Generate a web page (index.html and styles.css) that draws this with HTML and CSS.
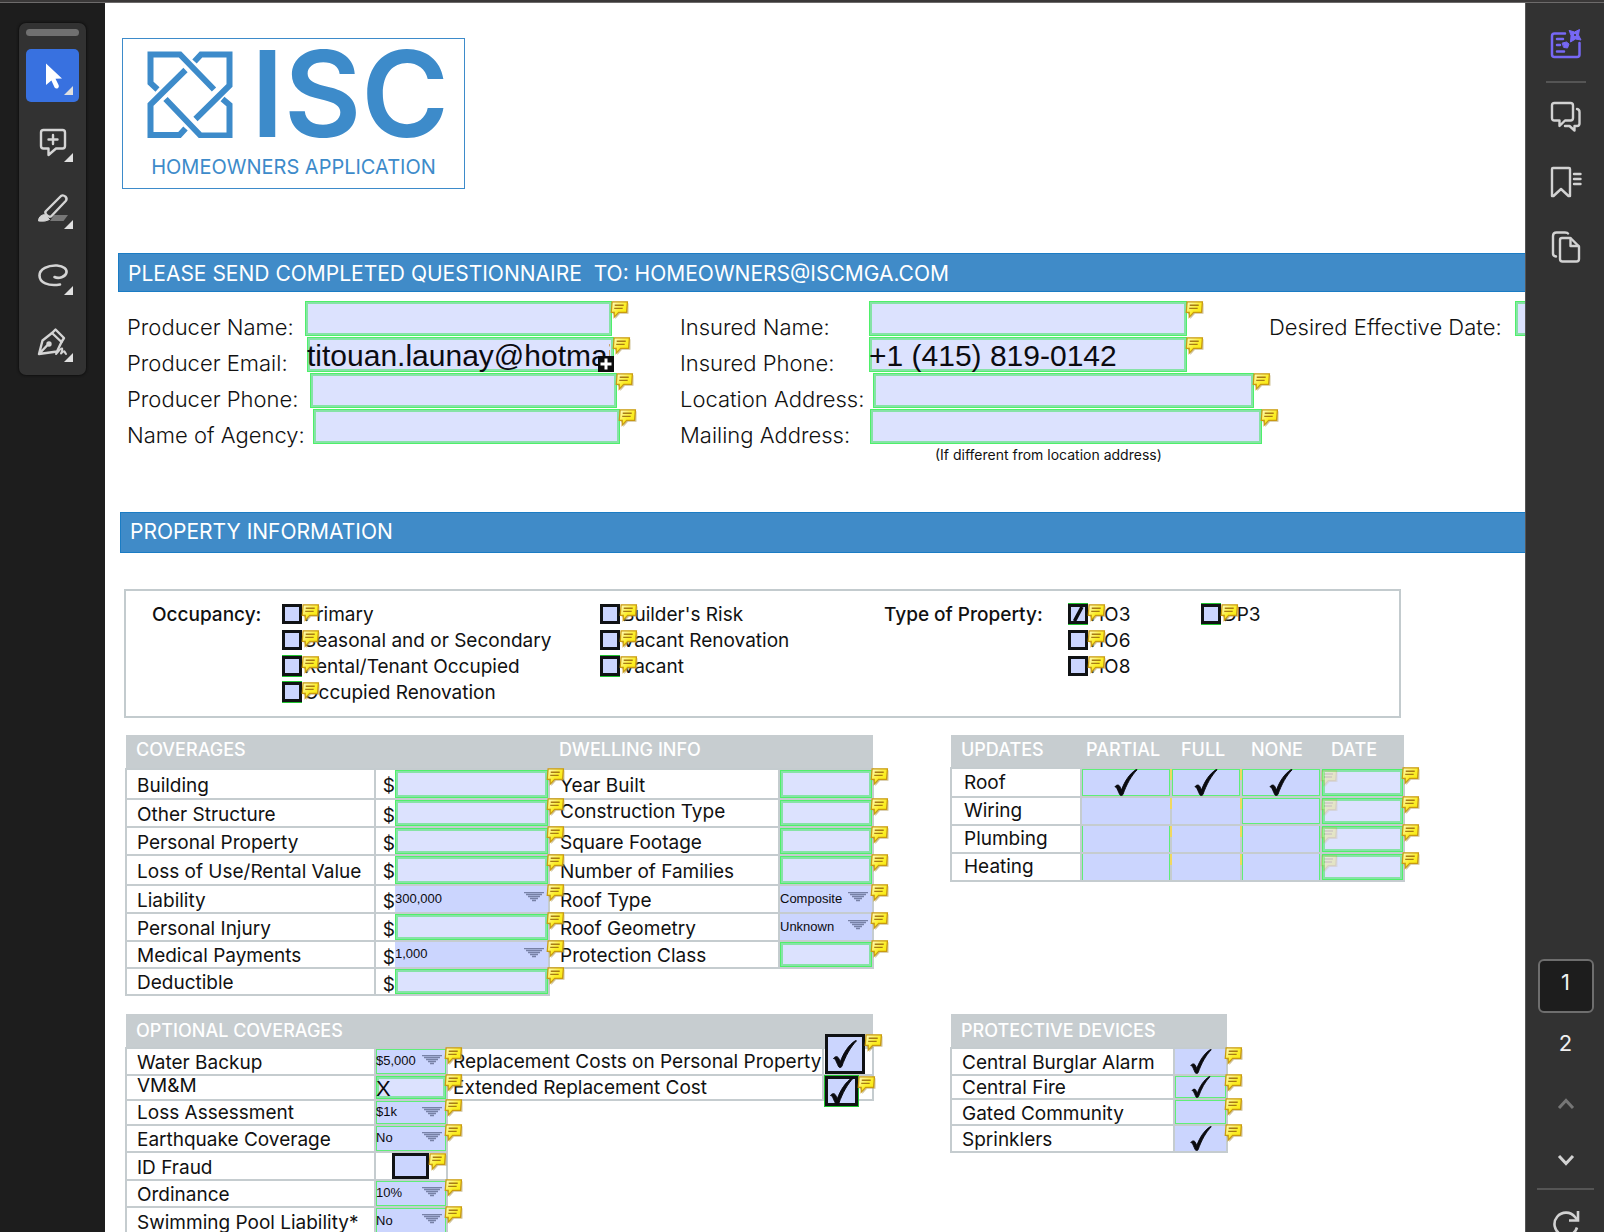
FILE: index.html
```html
<!DOCTYPE html>
<html lang="en">
<head>
<meta charset="utf-8">
<title>Homeowners Application</title>
<link rel="stylesheet" href="styles.css">
</head>
<body>
<svg class="defs" aria-hidden="true">
  <defs>
    <linearGradient id="noteFill" x1="0" y1="0" x2="1" y2="1">
      <stop offset="0" stop-color="#fffbd0"/>
      <stop offset="0.5" stop-color="#fcee2c"/>
      <stop offset="1" stop-color="#f8ea00"/>
    </linearGradient>
    <symbol id="note" viewBox="0 0 18 17">
      <path d="M3 2h14.5v10h-8l-4.500 5v-4.500H2.500z" fill="#a98f45" opacity="0.55"/>
      <path d="M2 .8h14.500l-.8 9.900H8.200L4 15.300v-4.600H1.200z" fill="url(#noteFill)" stroke="#c99a10" stroke-width="1.200"/>
      <path d="M4.500 4h8.500M4 7h8" stroke="#a87c14" stroke-width="1.300"/>
    </symbol>
    <symbol id="arrow" viewBox="0 0 20 10">
      <path d="M0 .5h20M2 2.500h16M4 4.500h12M6 6.500h8M8 8.500h4" stroke="#7781a6" stroke-width="1.300"/>
    </symbol>
    <symbol id="check" viewBox="0 0 24 28">
      <path d="M.5 18.500c1.500-2.200 4-2.600 5.200-.2l1.600 3.500C10.500 13 15.500 5 22.500.6L23.500.8C17.500 7 12.500 16 8.800 26.500c-.8 1.200-2.500 1.400-3.200.2C4 23.500 3 20.500 1.800 18.800z" fill="#0b0b10" stroke="#0b0b10"/>
    </symbol>
    <symbol id="corner" viewBox="0 0 9 9"><path d="M9 0v9H0z" fill="#e0e0e0"/></symbol>
  </defs>
</svg>

<div class="topline"></div>
<div class="app">
  <aside class="left">
    <div class="tools">
      <span class="grip"></span>
      <div class="tool-list">
        <button class="tool tool-active" aria-label="Select">
          <svg width="34" height="34" viewBox="0 0 34 34"><path d="M10 4.500v21.500l5.400-4.400 3.200 6.800q1.300 1.800 3.200.8 1.600-1 .9-3l-3.200-6.400 6.500-.4z" fill="#fff"/></svg>
          <svg class="corner" aria-hidden="true"><use href="#corner"/></svg>
        </button>
        <button class="tool" aria-label="Add comment">
          <svg width="34" height="34" viewBox="0 0 34 34" fill="none" stroke="#d4d4d4" stroke-width="2.400" stroke-linejoin="round" stroke-linecap="round"><path d="M7.500 5h19q2.500 0 2.500 2.500v13.500q0 2.500-2.500 2.500H20l-7.500 6.500v-6.500h-5Q5 23.500 5 21V7.500Q5 5 7.500 5z"/><path d="M17 10v9M12.500 14.500h9"/></svg>
          <svg class="corner" aria-hidden="true"><use href="#corner"/></svg>
        </button>
        <button class="tool" aria-label="Highlight">
          <svg width="34" height="34" viewBox="0 0 34 34" fill="none" stroke="#d4d4d4" stroke-width="2.400" stroke-linejoin="round"><path d="M18 23h14l-4.500 6H14z" fill="#777" stroke="none"/><path d="M9.500 19.500 25 4q2-1.500 4.500.6 2 2.200.2 4.400L15 24.500q-2 .8-4-1.200-2.200-2-1.500-3.800z"/><path d="m8.500 22.500 5 5q-4 2.500-11 1.500 0-5.500 6-6.500z" fill="#d4d4d4" stroke-width="1"/></svg>
          <svg class="corner" aria-hidden="true"><use href="#corner"/></svg>
        </button>
        <button class="tool" aria-label="Draw">
          <svg width="34" height="34" viewBox="0 0 34 34" fill="none" stroke="#d4d4d4" stroke-width="2.600" stroke-linecap="round"><path d="M24 25.500C12 27.500 3.500 23.500 3.500 16.500 3.500 10 12 6 21 6.500c7 .5 10 3.800 9.500 7-.8 4.500-8 6.500-12 4.500"/></svg>
          <svg class="corner" aria-hidden="true"><use href="#corner"/></svg>
        </button>
        <button class="tool" aria-label="Sign">
          <svg width="34" height="34" viewBox="0 0 34 34" fill="none" stroke="#d4d4d4" stroke-width="2.400" stroke-linejoin="round" stroke-linecap="round"><path d="M3 28 6.500 14.500 16 7l9.500 9L21 25.500 3 28l8-8.500"/><path d="m16 7 3.500-3.500 8.500 8.500-2.500 4"/><circle cx="13" cy="18" r="1.500" fill="#d4d4d4"/><path d="M20 28q5-6 6-5.500t-1 5q3-3 3.500-2t1.500 2.500" stroke-width="2"/></svg>
          <svg class="corner" aria-hidden="true"><use href="#corner"/></svg>
        </button>
      </div>
    </div>
  </aside>

  <main class="doc">
    <header class="logo">
      <div class="logo-row">
        <svg width="86" height="87" viewBox="0 0 86 87" fill="none" stroke="#3d8bca" stroke-width="6" aria-hidden="true">
          <path d="M10.500 38.500 3.500 32V3.500h29.500l34 35"/>
          <path d="M47.500 10.500 54 3.500h28.500v31L48.500 68"/>
          <path d="M75.500 48l7 6v30.500H53.500l-35-36.500"/>
          <path d="M38.500 77.500l-6 6.500H3.500V53.500L38.500 19"/>
        </svg>
        <h1>ISC</h1>
      </div>
      <p>HOMEOWNERS APPLICATION</p>
    </header>

    <h2 class="bar">PLEASE SEND COMPLETED QUESTIONNAIRE &nbsp;TO: HOMEOWNERS@ISCMGA.COM</h2>

    <form class="contact">
      <div class="group group-producer">
        <div class="line"><label class="w178" for="pname">Producer Name:</label><span class="field f307"><input id="pname"><svg class="note"><use href="#note"/></svg></span></div>
        <div class="line"><label class="w180" for="pemail">Producer Email:</label><span class="field f307"><input id="pemail" value="titouan.launay@hotmail.com"><svg class="more" viewBox="0 0 16 16"><path d="M0 0h16v16H0z" fill="#0c0c0c"/><path d="M8 2.500v11M2.500 8h11" stroke="#fff" stroke-width="3"/></svg><svg class="note"><use href="#note"/></svg></span></div>
        <div class="line"><label class="w183" for="pphone">Producer Phone:</label><span class="field f307"><input id="pphone"><svg class="note"><use href="#note"/></svg></span></div>
        <div class="line"><label class="w186" for="agency">Name of Agency:</label><span class="field f307"><input id="agency"><svg class="note"><use href="#note"/></svg></span></div>
      </div>
      <div class="group group-insured">
        <div class="line"><label class="w189" for="iname">Insured Name:</label><span class="field f318"><input id="iname"><svg class="note"><use href="#note"/></svg></span></div>
        <div class="line"><label class="w189" for="iphone">Insured Phone:</label><span class="field f318"><input id="iphone" value="+1 (415) 819-0142"><svg class="note"><use href="#note"/></svg></span></div>
        <div class="line"><label class="w193" for="loc">Location Address:</label><span class="field f381"><input id="loc"><svg class="note"><use href="#note"/></svg></span></div>
        <div class="line"><label class="w190" for="mail">Mailing Address:</label><span class="field f392"><input id="mail"><svg class="note"><use href="#note"/></svg></span></div>
        <p class="hint">(If different from location address)</p>
      </div>
      <div class="group">
        <div class="line"><label class="w246" for="eff">Desired Effective Date:</label><span class="field f307"><input id="eff"></span></div>
      </div>
    </form>

    <h2 class="bar bar-property">PROPERTY INFORMATION</h2>

    <section class="occupancy">
      <h3>Occupancy:</h3>
      <div class="choices">
        <label class="choice"><span class="box"><input type="checkbox"><svg class="note"><use href="#note"/></svg></span>Primary</label>
        <label class="choice"><span class="box"><input type="checkbox"><svg class="note"><use href="#note"/></svg></span>Seasonal and or Secondary</label>
        <label class="choice"><span class="box box-lime"><input type="checkbox"><svg class="note"><use href="#note"/></svg></span>Rental/Tenant Occupied</label>
        <label class="choice"><span class="box box-lime"><input type="checkbox"><svg class="note"><use href="#note"/></svg></span>Occupied Renovation</label>
      </div>
      <div class="choices">
        <label class="choice"><span class="box"><input type="checkbox"><svg class="note"><use href="#note"/></svg></span>Builder's Risk</label>
        <label class="choice"><span class="box"><input type="checkbox"><svg class="note"><use href="#note"/></svg></span>Vacant Renovation</label>
        <label class="choice"><span class="box box-lime"><input type="checkbox"><svg class="note"><use href="#note"/></svg></span>Vacant</label>
      </div>
      <h3>Type of Property:</h3>
      <div class="choices">
        <label class="choice"><span class="box box-lime"><input type="checkbox" checked><svg class="slash" viewBox="0 0 14 14"><path d="M3.500 14 11 0" fill="none" stroke="#0b0b10" stroke-width="3.500"/></svg><svg class="note"><use href="#note"/></svg></span>HO3</label>
        <label class="choice"><span class="box"><input type="checkbox"><svg class="note"><use href="#note"/></svg></span>HO6</label>
        <label class="choice"><span class="box"><input type="checkbox"><svg class="note"><use href="#note"/></svg></span>HO8</label>
      </div>
      <div class="choices">
        <label class="choice"><span class="box box-lime"><input type="checkbox"><svg class="note"><use href="#note"/></svg></span>DP3</label>
      </div>
    </section>

    <section class="tables">
      <table class="coverages">
        <colgroup><col class="c249"><col class="c174"><col class="c230"><col class="c94"></colgroup>
        <thead><tr><th colspan="2">COVERAGES</th><th colspan="2">DWELLING INFO</th></tr></thead>
        <tbody>
          <tr class="r30"><th><label for="c1">Building</label></th><td><div class="money">$<span class="field"><input id="c1"><svg class="note"><use href="#note"/></svg></span></div></td><th><label for="d1">Year Built</label></th><td><span class="field"><input id="d1"><svg class="note"><use href="#note"/></svg></span></td></tr>
          <tr class="r28"><th><label for="c2">Other Structure</label></th><td><div class="money">$<span class="field"><input id="c2"><svg class="note"><use href="#note"/></svg></span></div></td><th class="raised"><label for="d2">Construction Type</label></th><td><span class="field"><input id="d2"><svg class="note"><use href="#note"/></svg></span></td></tr>
          <tr class="r28"><th><label for="c3">Personal Property</label></th><td><div class="money">$<span class="field"><input id="c3"><svg class="note"><use href="#note"/></svg></span></div></td><th><label for="d3">Square Footage</label></th><td><span class="field"><input id="d3"><svg class="note"><use href="#note"/></svg></span></td></tr>
          <tr class="r30"><th><label for="c4">Loss of Use/Rental Value</label></th><td><div class="money">$<span class="field"><input id="c4"><svg class="note"><use href="#note"/></svg></span></div></td><th><label for="d4">Number of Families</label></th><td><span class="field"><input id="d4"><svg class="note"><use href="#note"/></svg></span></td></tr>
          <tr class="r28"><th><label for="c5">Liability</label></th><td><div class="money">$<span class="field pick"><select id="c5"><option>300,000</option></select><svg class="arrow"><use href="#arrow"/></svg><svg class="note"><use href="#note"/></svg></span></div></td><th><label for="d5">Roof Type</label></th><td><span class="field pick"><select id="d5"><option>Composite</option></select><svg class="arrow"><use href="#arrow"/></svg><svg class="note"><use href="#note"/></svg></span></td></tr>
          <tr class="r28"><th><label for="c6">Personal Injury</label></th><td><div class="money">$<span class="field"><input id="c6"><svg class="note"><use href="#note"/></svg></span></div></td><th><label for="d6">Roof Geometry</label></th><td><span class="field pick"><select id="d6"><option>Unknown</option></select><svg class="arrow"><use href="#arrow"/></svg><svg class="note"><use href="#note"/></svg></span></td></tr>
          <tr class="r27"><th><label for="c7">Medical Payments</label></th><td><div class="money">$<span class="field pick"><select id="c7"><option>1,000</option></select><svg class="arrow"><use href="#arrow"/></svg><svg class="note"><use href="#note"/></svg></span></div></td><th><label for="d7">Protection Class</label></th><td><span class="field"><input id="d7"><svg class="note"><use href="#note"/></svg></span></td></tr>
          <tr class="r27"><th><label for="c8">Deductible</label></th><td><div class="money">$<span class="field"><input id="c8"><svg class="note"><use href="#note"/></svg></span></div></td></tr>
        </tbody>
      </table>

      <table class="updates">
        <colgroup><col class="c130"><col class="c90"><col class="c70"><col class="c80"><col class="c83"></colgroup>
        <thead><tr><th>UPDATES</th><th>PARTIAL</th><th>FULL</th><th>NONE</th><th>DATE</th></tr></thead>
        <tbody>
          <tr class="r29"><th>Roof</th><td><span class="tick lime"><input type="checkbox" checked aria-label="Roof partial"><svg class="check"><use href="#check"/></svg></span></td><td><span class="tick lime sliver"><input type="checkbox" checked aria-label="Roof full"><svg class="check"><use href="#check"/></svg></span></td><td><span class="tick lime sliver"><input type="checkbox" checked aria-label="Roof none"><svg class="check"><use href="#check"/></svg></span></td><td><span class="field"><input aria-label="Roof date"><svg class="ghost"><use href="#note"/></svg><svg class="note"><use href="#note"/></svg></span></td></tr>
          <tr class="r28"><th>Wiring</th><td><span class="tick"><input type="checkbox" aria-label="Wiring partial"></span></td><td><span class="tick sliver"><input type="checkbox" aria-label="Wiring full"></span></td><td><span class="tick lime sliver"><input type="checkbox" aria-label="Wiring none"></span></td><td><span class="field"><input aria-label="Wiring date"><svg class="ghost"><use href="#note"/></svg><svg class="note"><use href="#note"/></svg></span></td></tr>
          <tr class="r28"><th>Plumbing</th><td><span class="tick lime-side"><input type="checkbox" aria-label="Plumbing partial"></span></td><td><span class="tick sliver"><input type="checkbox" aria-label="Plumbing full"></span></td><td><span class="tick lime-side sliver"><input type="checkbox" aria-label="Plumbing none"></span></td><td><span class="field"><input aria-label="Plumbing date"><svg class="ghost"><use href="#note"/></svg><svg class="note"><use href="#note"/></svg></span></td></tr>
          <tr class="r28"><th>Heating</th><td><span class="tick lime-side"><input type="checkbox" aria-label="Heating partial"></span></td><td><span class="tick sliver"><input type="checkbox" aria-label="Heating full"></span></td><td><span class="tick lime-side sliver"><input type="checkbox" aria-label="Heating none"></span></td><td><span class="field"><input aria-label="Heating date"><svg class="ghost"><use href="#note"/></svg><svg class="note"><use href="#note"/></svg></span></td></tr>
        </tbody>
      </table>

      <table class="optional">
        <colgroup><col class="c249"><col class="c72"><col class="c376"><col class="c50"></colgroup>
        <thead><tr><th colspan="4">OPTIONAL COVERAGES</th></tr></thead>
        <tbody>
          <tr class="r27"><th><label for="o1">Water Backup</label></th><td><span class="field pick lime"><select id="o1"><option>$5,000</option></select><svg class="arrow"><use href="#arrow"/></svg><svg class="note"><use href="#note"/></svg></span></td><th class="tight"><label for="o8">Replacement Costs on Personal Property</label></th><td><span class="box box-big"><input id="o8" type="checkbox" checked><svg class="check"><use href="#check"/></svg><svg class="note"><use href="#note"/></svg></span></td></tr>
          <tr class="r25"><th class="raised"><label for="o2">VM&amp;M</label></th><td><span class="field mark"><input id="o2" value="X"><svg class="note"><use href="#note"/></svg></span></td><th class="tight"><label for="o9">Extended Replacement Cost</label></th><td><span class="box box-mid"><input id="o9" type="checkbox" checked><svg class="check"><use href="#check"/></svg><svg class="note"><use href="#note"/></svg></span></td></tr>
          <tr class="r25"><th><label for="o3">Loss Assessment</label></th><td><span class="field pick lime"><select id="o3"><option>$1k</option></select><svg class="arrow"><use href="#arrow"/></svg><svg class="note"><use href="#note"/></svg></span></td></tr>
          <tr class="r27"><th><label for="o4">Earthquake Coverage</label></th><td><span class="field pick lime"><select id="o4"><option>No</option></select><svg class="arrow"><use href="#arrow"/></svg><svg class="note"><use href="#note"/></svg></span></td></tr>
          <tr class="r28"><th><label for="o5">ID Fraud</label></th><td><span class="box box-wide"><input id="o5" type="checkbox"><svg class="note"><use href="#note"/></svg></span></td></tr>
          <tr class="r27"><th><label for="o6">Ordinance</label></th><td><span class="field pick lime"><select id="o6"><option>10%</option></select><svg class="arrow"><use href="#arrow"/></svg><svg class="note"><use href="#note"/></svg></span></td></tr>
          <tr class="r28"><th><label for="o7">Swimming Pool Liability*</label></th><td><span class="field pick lime"><select id="o7"><option>No</option></select><svg class="arrow"><use href="#arrow"/></svg><svg class="note"><use href="#note"/></svg></span></td></tr>
          <tr class="r28"><th></th><td><span class="box box-next"><input type="checkbox" aria-label="Include"></span></td></tr>
        </tbody>
      </table>

      <table class="protective">
        <colgroup><col class="c223"><col class="c53"></colgroup>
        <thead><tr><th colspan="2">PROTECTIVE DEVICES</th></tr></thead>
        <tbody>
          <tr class="r27"><th><label for="p1">Central Burglar Alarm</label></th><td><span class="tick"><input id="p1" type="checkbox" checked><svg class="check"><use href="#check"/></svg><svg class="note"><use href="#note"/></svg></span></td></tr>
          <tr class="r24"><th><label for="p2">Central Fire</label></th><td><span class="tick lime"><input id="p2" type="checkbox" checked><svg class="check"><use href="#check"/></svg><svg class="note"><use href="#note"/></svg></span></td></tr>
          <tr class="r26"><th><label for="p3">Gated Community</label></th><td><span class="tick lime"><input id="p3" type="checkbox"><svg class="note"><use href="#note"/></svg></span></td></tr>
          <tr class="r27"><th><label for="p4">Sprinklers</label></th><td><span class="tick"><input id="p4" type="checkbox" checked><svg class="check"><use href="#check"/></svg><svg class="note"><use href="#note"/></svg></span></td></tr>
        </tbody>
      </table>
    </section>
  </main>

  <aside class="rail">
    <div class="rail-top">
      <button aria-label="AI assistant"><svg width="32" height="32" viewBox="0 0 32 32" fill="none" stroke="#7768f5" stroke-width="2.500" stroke-linecap="round" stroke-linejoin="round"><path d="M15 5.500H4.500Q2 5.500 2 8v18.500Q2 29 4.500 29h22.500q2.500 0 2.500-2.500V15"/><path d="M7 11h6M7 17h3M7 23.500h7"/><path d="m19.500 2.500 5 1.500 5-2.500-1 5.500 2.500 5-5.500-1-5 3 .5-6z" fill="#7768f5" stroke-width="1"/><path d="m12.500 15 4-1 2.500 2-1.500 4-3.500-.5z" fill="#7768f5" stroke-width="1"/><circle cx="25" cy="7" r="1" fill="#323232" stroke="none"/></svg></button>
      <hr>
      <button aria-label="Comments"><svg width="32" height="32" viewBox="0 0 32 32" fill="none" stroke="#d2d2d2" stroke-width="2.400" stroke-linejoin="round" stroke-linecap="round"><path d="M4.500 2h16Q23 2 23 4.500V17q0 2.500-2.500 2.500H15L9.500 25v-5.500h-5Q2 19.500 2 17V4.500Q2 2 4.500 2z"/><path d="M27 8q2.500.5 2.500 3v11.500q0 2.500-2.500 2.500h-2.500v4.500L19.500 25H15"/></svg></button>
      <button aria-label="Bookmarks"><svg width="32" height="32" viewBox="0 0 32 32" fill="none" stroke="#d2d2d2" stroke-width="2.400" stroke-linejoin="round" stroke-linecap="round"><path d="M3 2h16q1 0 1 1v27h-1.500L11 23l-7.500 7H2V3q0-1 1-1z"/><path d="M24 8h6.500M24 13h6.500M24 18h6.500"/></svg></button>
      <button aria-label="Pages"><svg width="32" height="32" viewBox="0 0 32 32" fill="none" stroke="#d2d2d2" stroke-width="2.400" stroke-linejoin="round" stroke-linecap="round"><path d="M12 7h8.500l8.500 8.500V28q0 2.500-2.500 2.500H12.500Q10 30.500 10 28V9q0-2 2-2z"/><path d="M20.500 7.500V15h8"/><path d="M6 25.500q-3-.5-3-3V5Q3 1.500 6.500 1.500H15q2.500 0 3 1"/></svg></button>
    </div>
    <div class="rail-bottom">
      <button class="page page-current">1</button>
      <button class="page">2</button>
      <button class="step" aria-label="Previous page"><svg width="18" height="12" viewBox="0 0 18 12" fill="none" stroke="#767676" stroke-width="3"><path d="m2 10 7-7.500L16 10"/></svg></button>
      <button class="step" aria-label="Next page"><svg width="18" height="12" viewBox="0 0 18 12" fill="none" stroke="#d2d2d2" stroke-width="3"><path d="m2 2 7 7.500L16 2"/></svg></button>
      <hr class="wide">
      <button class="rotate" aria-label="Rotate"><svg width="28" height="28" viewBox="0 0 28 28" fill="none" stroke="#d2d2d2" stroke-width="2.600"><path d="M25 17.500A11.500 11.500 0 1 1 23 7l2.500 3"/><path d="M26 1v9.500h-9"/></svg></button>
    </div>
  </aside>
</div>
</body>
</html>
```
FILE: styles.css
```css
* { box-sizing: border-box; }

body {
  margin: 0;
  background: #1d1d1d;
  color: #111;
  font-family: Inter, "Open Sans", sans-serif;
  overflow: hidden;
}

button {
  border: 0;
  padding: 0;
  background: none;
  font: inherit;
}

svg { display: block; flex: none; }
.defs { position: absolute; width: 0; height: 0; }

.topline {
  height: 3px;
  background: #3a3838;
  border-bottom: 1px solid #6d6b6b;
}

.app {
  display: grid;
  grid-template-columns: 105px minmax(0, 1fr) 79px;
  height: calc(100vh - 3px);
}

/* Floating tool palette */
.left { padding: 20px 19px; }

.tools {
  width: 67px;
  padding: 6px 7px;
  border-radius: 7px;
  background: #323232;
  box-shadow: 0 0 2px 1px #111;
}

.grip {
  display: block;
  height: 7px;
  margin-bottom: 13px;
  border-radius: 4px;
  background: #707070;
}

.tool-list {
  display: flex;
  flex-direction: column;
  justify-content: space-between;
  height: 320px;
}

.tool {
  position: relative;
  display: grid;
  place-items: center;
  height: 53px;
  border-radius: 5px;
}

.tool-active { background: #3871e0; }

.corner {
  position: absolute;
  right: 6px;
  bottom: 7px;
  width: 9px;
  height: 9px;
}

/* Document */
.doc {
  overflow: hidden;
  background: #fff;
  padding: 35px 0 0 13px;
}

.logo {
  width: 343px;
  height: 151px;
  margin-left: 4px;
  padding: 12px 24px;
  border: 1px solid #3d8bca;
  color: #3d8bca;
}

.logo-row { display: flex; align-items: center; gap: 18px; }

.logo h1 {
  margin: 0;
  font-size: 119px;
  font-weight: 600;
  line-height: 87px;
}

.logo p {
  margin: 17px 0 0;
  font-size: 20px;
  line-height: 24px;
  text-align: center;
  white-space: nowrap;
}

.bar {
  margin: 64px 0 0;
  padding: 2px 9px 0;
  border: 1px solid #1b7cc4;
  border-right: 0;
  background: #408bc8;
  color: #fff;
  font-size: 21px;
  font-weight: 400;
  line-height: 35px;
  white-space: nowrap;
}

.bar-property {
  margin: 47px 0 0 2px;
  padding: 1px 9px 3px;
}

.contact {
  display: flex;
  padding: 9px 0 0 9px;
}

.group { flex: none; }
.group-producer { width: 553px; }
.group-insured { width: 589px; }

.line { display: flex; height: 36px; font-size: 22px; font-weight: 300; }
.line label { flex: none; line-height: 53px; white-space: nowrap; }
.line .field { height: 35px; flex: none; }
.line .note { top: 0; }

.w178 { width: 178px; }
.w180 { width: 180px; }
.w183 { width: 183px; }
.w186 { width: 186px; }
.w189 { width: 189px; }
.w190 { width: 190px; }
.w193 { width: 193px; }
.w246 { width: 246px; }
.f307 { width: 307px; }
.f318 { width: 318px; }
.f381 { width: 381px; }
.f392 { width: 392px; }

.hint {
  margin: 0;
  padding-left: 255px;
  font-size: 14px;
  line-height: 19px;
  height: 20px;
}

/* Fillable fields */
.field { position: relative; display: block; }

.field input {
  display: block;
  width: 100%;
  height: 100%;
  padding: 0;
  border: 0;
  border-radius: 0;
  box-shadow: inset 0 0 0 1px #4ef06a, inset 0 0 0 3px #86e3a6;
  background: #dce2fe;
  color: #0b0b10;
  font-family: "Liberation Sans", Arial, sans-serif;
}

.line .field input { padding: 3px 4px 0 0; font-size: 30px; }
.mark input { padding-top: 3px; font-size: 22px; }

.pick, .tick { background: #cbd5fe; }

.pick select {
  display: block;
  width: 100%;
  height: 100%;
  padding: 0 0 2px;
  border: 0;
  appearance: none;
  background: none;
  color: #0b0b10;
  font-family: "Liberation Sans", Arial, sans-serif;
  font-size: 13px;
}

.lime { box-shadow: inset 0 0 0 1px #5fee78; }
.lime-side { box-shadow: inset 1px 0 #5fee78, inset -1px 0 #5fee78; }

.arrow {
  position: absolute;
  top: 6px;
  right: 4px;
  width: 20px;
  height: 10px;
  pointer-events: none;
}

.note {
  position: absolute;
  z-index: 2;
  top: -2px;
  left: calc(100% - 2px);
  width: 19px;
  height: 18px;
  pointer-events: none;
}

.box .note { top: 0; left: calc(100% - 1px); }

.more {
  position: absolute;
  right: 0;
  bottom: 0;
  width: 16px;
  height: 16px;
}

/* Occupancy panel */
.occupancy {
  display: grid;
  grid-template-columns: 130px 318px 284px 184px 133px 1fr;
  width: 1277px;
  height: 129px;
  margin: 36px 0 0 6px;
  padding: 13px 0 0 26px;
  border: 2px solid #c3cbce;
  font-size: 19px;
}

.occupancy h3 {
  margin: 0;
  font-size: 19px;
  font-weight: 500;
  line-height: 21px;
}

.choice {
  display: flex;
  gap: 2px;
  height: 26px;
  line-height: 22px;
  white-space: nowrap;
}

.box { position: relative; display: block; width: 20px; height: 20px; flex: none; }

.box input {
  display: block;
  width: 100%;
  height: 100%;
  margin: 0;
  appearance: none;
  border: 3px solid #101214;
  background: #cbd5fe;
}

.box-lime { box-shadow: 0 -1px #1fc42f, 0 1px #1fc42f; }

.slash {
  position: absolute;
  top: 3px;
  left: 3px;
  width: 14px;
  height: 14px;
}

/* Tables */
.tables {
  display: grid;
  grid-template-columns: 748px 1fr;
  column-gap: 77px;
  row-gap: 18px;
  align-items: start;
  justify-items: start;
  padding: 17px 0 0 7px;
}

table {
  border-collapse: collapse;
  table-layout: fixed;
  width: 748px;
  font-size: 19px;
}

.updates { width: 454px; }
.protective { width: 277px; }

.c249 { width: 249px; }
.c174 { width: 174px; }
.c230 { width: 230px; }
.c94 { width: 94px; }
.c130 { width: 130px; }
.c90 { width: 90px; }
.c70 { width: 70px; }
.c80 { width: 80px; }
.c83 { width: 83px; }
.c72 { width: 72px; }
.c376 { width: 376px; }
.c50 { width: 50px; }
.c223 { width: 223px; }
.c53 { width: 53px; }

thead tr { height: 34px; }
.updates thead tr { height: 33px; }

thead th {
  padding: 0 10px;
  background: #c7cdd0;
  color: #fff;
  font-size: 18px;
  font-weight: 500;
  text-align: left;
  line-height: 28px;
}

.updates thead th { padding: 0 0 2px 10px; }
.updates thead th:nth-child(2) { padding-left: 5px; }
.coverages thead th { padding-bottom: 4px; }

tbody th, tbody td { border: 2px solid #c5cccf; }

tbody th {
  padding: 3px 0 0 10px;
  font-weight: 400;
  text-align: left;
  line-height: 20px;
  white-space: nowrap;
}

.updates tbody th { padding-top: 0; padding-left: 12px; }
tbody th.raised { padding: 0 0 3px 10px; }
tbody th.tight { padding: 0 0 0 5px; }
td { padding: 0; height: inherit; }

.r24 { height: 24px; }
.r25 { height: 25px; }
.r26 { height: 26px; }
.r27 { height: 27px; }
.r28 { height: 28px; }
.r29 { height: 29px; }
.r30 { height: 30px; }

.r24 .field, .r24 .tick { height: 22px; }
.r25 .field { height: 23px; }
.r26 .field, .r26 .tick { height: 24px; }
.r27 .field, .r27 .tick { height: 25px; }
.r28 .field, .r28 .tick { height: 26px; }
.r29 .field, .r29 .tick { height: 27px; }
.r30 .field { height: 28px; }

.r24 th { padding-top: 2px; }
.r25 th { padding-top: 1px; }

.money {
  display: flex;
  justify-content: flex-end;
  line-height: 32px;
  height: 26px;
}

.r30 .money { height: 28px; }
.r27 .money { height: 25px; }
.money .field { width: 153px; flex: none; }

.tick { position: relative; display: block; }

.tick input {
  display: block;
  width: 100%;
  height: 100%;
  margin: 0;
  appearance: none;
}

.check {
  position: absolute;
  inset: 0;
  width: 24px;
  height: 100%;
  margin: auto;
  pointer-events: none;
}

.sliver::before {
  content: "";
  position: absolute;
  top: 0;
  left: -2px;
  width: 2px;
  height: 11px;
  background: #f0d860;
}

.ghost {
  position: absolute;
  top: 1px;
  left: -2px;
  width: 18px;
  height: 17px;
  opacity: 0.25;
}

td .box-big { width: 40px; height: 40px; margin: -16px 0 0 1px; }
td .box-mid { width: 33px; height: 30px; margin: 0 0 -7px 1px; box-shadow: 0 0 0 1px #1fc42f; }
td .box-wide { width: 37px; height: 26px; margin-left: 16px; }
td .box-next { width: 30px; height: 26px; margin: -8px 0 0 16px; }

/* Right rail */
.rail {
  display: flex;
  flex-direction: column;
  justify-content: space-between;
  overflow: hidden;
  padding-left: 1px;
  border-left: 1px solid #555;
  background: #323232;
}

.rail-top, .rail-bottom {
  display: flex;
  flex-direction: column;
  align-items: center;
}

.rail-top { padding-top: 25px; gap: 33px; }

.rail hr {
  width: 40px;
  height: 2px;
  margin: -12px 0 -15px;
  border: 0;
  background: #555;
}

.rail .wide { width: 57px; margin: 10px 0 20px; }

.page {
  width: 56px;
  height: 54px;
  margin-bottom: 4px;
  border-radius: 6px;
  color: #f0f0f0;
  font-size: 22px;
}

.page + .page { margin-bottom: 15px; padding-bottom: 2px; }

.page-current {
  padding-bottom: 9px;
  border: 2px solid #6e6e6e;
  background: #1d1d1d;
}

.step { display: grid; place-items: center; width: 36px; height: 36px; }
.step + .step { margin-top: 20px; }
.rotate { margin-bottom: -6px; }
```
